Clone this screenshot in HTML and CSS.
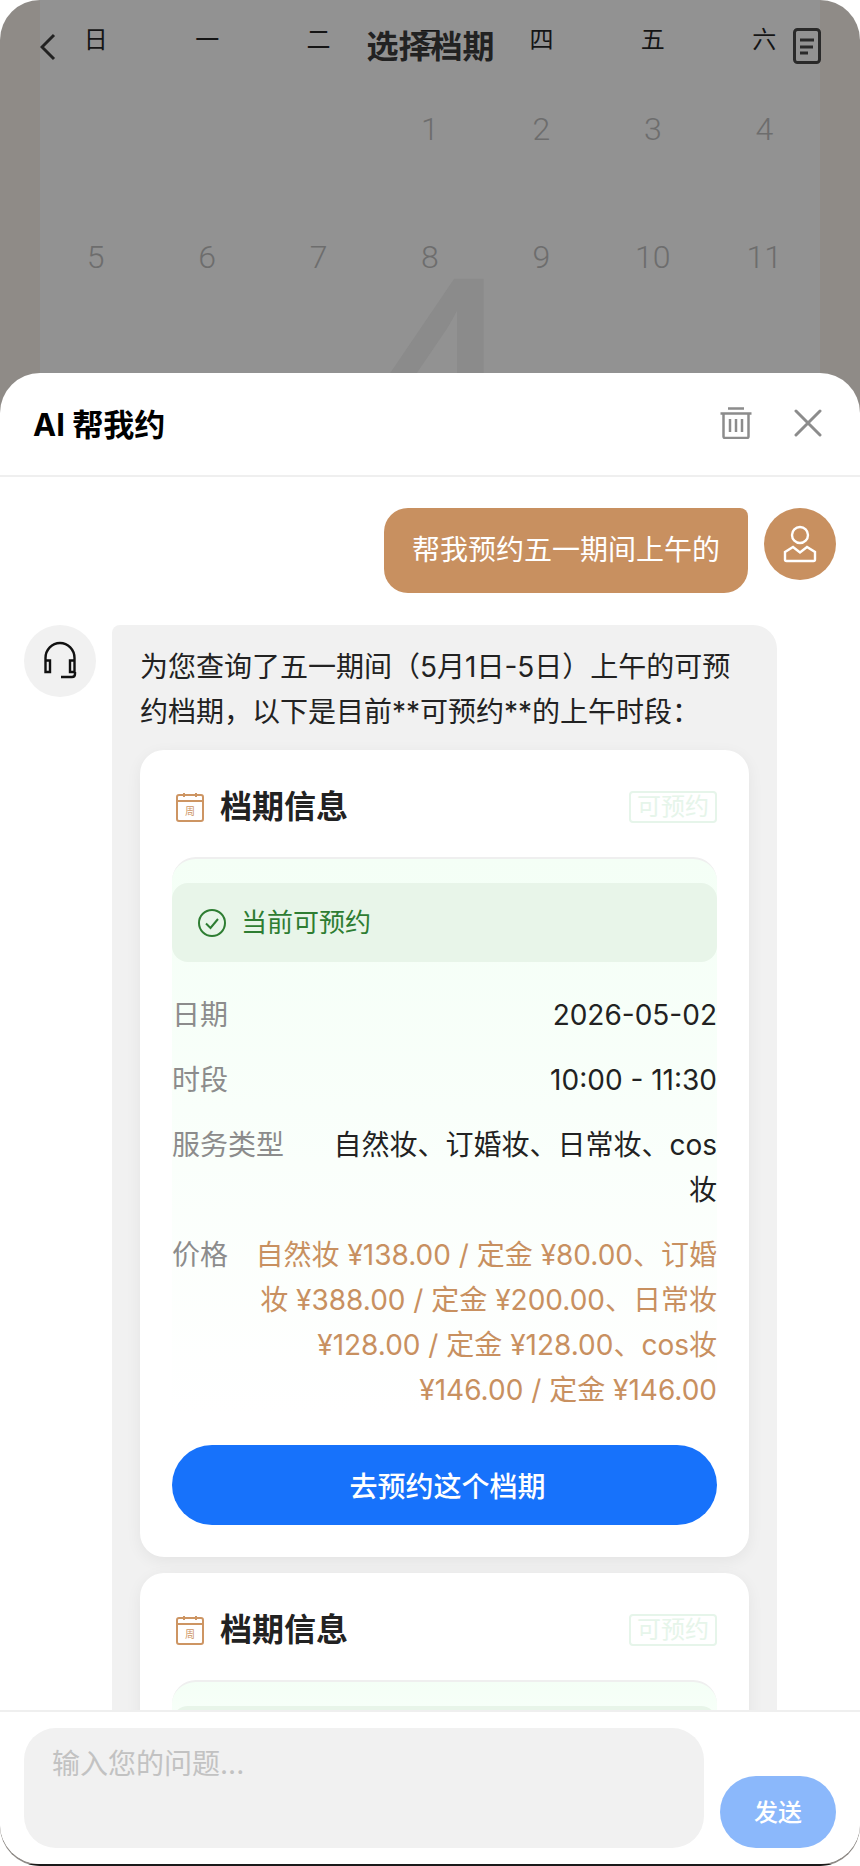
FILE: index.html
```html
<!doctype html>
<html lang="zh-CN">
    <head>
        <meta charset="utf-8">
        <meta name="viewport" content="width=device-width,user-scalable=no,initial-scale=1.0">
        <title>AI 帮我约</title>
        <link rel="stylesheet" href="styles.css">
    </head>
    <body>
        <div class="screen">

            <!-- 背景页:选择档期 -->
            <section class="calendar">
                <div class="watermark">4</div>
                <div class="cal-grid">
                    <span class="week">日</span><span class="week">一</span><span class="week">二</span><span class="week">三</span><span class="week">四</span><span class="week">五</span><span class="week">六</span>
                    <span></span><span></span><span></span><span class="day">1</span><span class="day">2</span><span class="day">3</span><span class="day">4</span>
                    <span class="day">5</span><span class="day">6</span><span class="day">7</span><span class="day">8</span><span class="day">9</span><span class="day">10</span><span class="day">11</span>
                </div>
            </section>
            <header class="page-head">
                <svg class="page-back" width="16" height="28" viewBox="0 0 16 28"><path d="M14 2 L2 14 L14 26"/></svg>
                <h1>选择档期</h1>
                <svg class="page-doc" width="28" height="36" viewBox="0 0 28 36"><rect x="1.5" y="1.5" width="25" height="33" rx="3"/><path d="M7 12 H21 M7 19 H20 M7 25 H15"/></svg>
            </header>

            <!-- 弹层 -->
            <section class="sheet">
                <div class="sheet-head">
                    <h2>AI 帮我约</h2>
                    <svg class="sheet-icon" width="32" height="32" viewBox="0 0 32 32"><path d="M8 1.5 H24 M0.5 6.5 H31.5 M3.5 6.5 V29.5 Q3.5 31 5 31 H27 Q28.5 31 28.5 29.5 V6.5 M10 12 V25 M16 12 V25 M22 12 V25"/></svg>
                    <svg class="sheet-icon close" width="28" height="28" viewBox="0 0 28 28"><path d="M2 2 L26 26 M26 2 L2 26"/></svg>
                </div>

                <div class="chat">
                    <div class="msg msg-user">
                        <div class="bubble bubble-user">帮我预约五一期间上午的</div>
                        <div class="avatar avatar-user">
                            <svg width="72" height="72" viewBox="0 0 72 72"><circle cx="36" cy="27" r="8"/><path d="M21 44 L29 39 L36 44.5 L43 39 L51 44 V51.5 Q51 53 49.5 53 H22.5 Q21 53 21 51.5 Z"/></svg>
                        </div>
                    </div>

                    <div class="msg">
                        <div class="avatar">
                            <svg width="72" height="72" viewBox="0 0 72 72"><path d="M21.5 36 V33 A14.5 15 0 0 1 50.5 33 V36 M21.5 35.5 H26 V47 H21.5 Z M46 35.5 H50.5 V47 H46 Z M51 47 V49 Q51 52 48 52 H37"/></svg>
                        </div>
                        <div class="bubble bubble-ai">
                            <p class="answer">为您查询了五一期间（5月1日-5日）上午的可预约档期，以下是目前**可预约**的上午时段：</p>

                            <div class="card">
                                <div class="card-head">
                                    <svg class="card-icon" width="28" height="30" viewBox="0 0 28 30"><rect x="1" y="3" width="26" height="26" rx="2"/><path d="M1 9 H27 M8 1 V5 M20 1 V5"/><text x="14" y="23" text-anchor="middle">周</text></svg>
                                    <h3>档期信息</h3>
                                    <span class="tag">可预约</span>
                                </div>
                                <div class="slot">
                                    <div class="slot-state">
                                        <svg width="28" height="28" viewBox="0 0 28 28"><circle cx="14" cy="14" r="13"/><path d="M8 14.5 L12.5 19 L20 10"/></svg>
                                        <span>当前可预约</span>
                                    </div>
                                    <dl class="slot-rows">
                                        <div class="row"><dt>日期</dt><dd>2026-05-02</dd></div>
                                        <div class="row"><dt>时段</dt><dd>10:00 - 11:30</dd></div>
                                        <div class="row"><dt>服务类型</dt><dd>自然妆、订婚妆、日常妆、cos妆</dd></div>
                                        <div class="row"><dt>价格</dt><dd class="price">自然妆 ¥138.00 / 定金 ¥80.00、订婚妆 ¥388.00 / 定金 ¥200.00、日常妆 ¥128.00 / 定金 ¥128.00、cos妆 ¥146.00 / 定金 ¥146.00</dd></div>
                                    </dl>
                                </div>
                                <button class="book-btn">去预约这个档期</button>
                            </div>

                            <div class="card">
                                <div class="card-head">
                                    <svg class="card-icon" width="28" height="30" viewBox="0 0 28 30"><rect x="1" y="3" width="26" height="26" rx="2"/><path d="M1 9 H27 M8 1 V5 M20 1 V5"/><text x="14" y="23" text-anchor="middle">周</text></svg>
                                    <h3>档期信息</h3>
                                    <span class="tag">可预约</span>
                                </div>
                                <div class="slot">
                                    <div class="slot-state">
                                        <svg width="28" height="28" viewBox="0 0 28 28"><circle cx="14" cy="14" r="13"/><path d="M8 14.5 L12.5 19 L20 10"/></svg>
                                        <span>当前可预约</span>
                                    </div>
                                </div>
                            </div>
                        </div>
                    </div>
                </div>

                <div class="sheet-foot">
                    <textarea class="ask" placeholder="输入您的问题..."></textarea>
                    <button class="send">发送</button>
                </div>
            </section>

            <div class="home-bar"></div>
        </div>
    </body>
</html>
```

FILE: styles.css
```css
*{
    margin: 0px;
    padding: 0px;
    box-sizing: border-box;
}
html,body{
    width: 860px;
    height: 1866px;
    overflow: hidden;
    background-color: #fff;
    font-family: Inter, "Noto Sans CJK SC", sans-serif;
}
.screen{
    position: relative;
    height: 1866px;
    border-radius: 40px;
    overflow: hidden;
    background-color: #8f8b87;
}

/* background page */
.calendar{
    position: relative;
    height: 400px;
    margin: 0 40px;
    background-color: #929292;
    overflow: hidden;
}
.cal-grid{
    position: relative;
    display: grid;
    grid-template-columns: repeat(7, 1fr);
    grid-template-rows: 65px 128px 128px;
    justify-items: center;
    align-items: center;
}
.week{
    align-self: start;
    height: 50px;
    margin-top: 15px;
    line-height: 50px;
    font-size: 24px;
    color: #151515;
}
.day{
    font-family: Roboto, sans-serif;
    font-size: 32px;
    font-weight: 300;
    color: #6d6d6d;
}
.watermark{
    position: absolute;
    top: 228px;
    left: 306px;
    font-size: 320px;
    line-height: 320px;
    font-family: "Liberation Sans", sans-serif;
    color: #8b8b8b;
}
.page-head{
    position: absolute;
    top: 18px;
    left: 40px;
    right: 39px;
    height: 56px;
    display: grid;
    grid-template-columns: 1fr auto 1fr;
    align-items: center;
}
.page-head h1{
    margin-bottom: 4px;
    font-size: 32px;
    font-weight: 700;
    color: #222;
}
.page-back{
    margin-top: 2px;
    fill: none;
    stroke: #222;
    stroke-width: 3;
}
.page-doc{
    justify-self: end;
    fill: none;
    stroke: #2a2a2a;
    stroke-width: 3;
}

/* sheet */
.sheet{
    position: absolute;
    top: 373px;
    left: 0;
    right: 0;
    bottom: 2px;
    display: flex;
    flex-direction: column;
    border-radius: 40px;
    background-color: #fff;
    overflow: hidden;
}
.sheet-head{
    flex: none;
    height: 104px;
    padding: 0 38px 3px 33px;
    display: flex;
    align-items: center;
    border-bottom: 2px solid #efefef;
}
.sheet-head h2{
    flex: 1;
    font-size: 31px;
    font-weight: 700;
    color: #000;
}
.sheet-icon{
    fill: none;
    stroke: #8c8c8c;
    stroke-width: 2.5;
}
.close{
    margin-left: 42px;
    stroke-width: 3;
    stroke-linecap: round;
}
.chat{
    flex: 1;
    min-height: 0;
    overflow: hidden;
    padding: 31px 24px 0;
}
.msg{
    display: flex;
    gap: 16px;
    align-items: flex-start;
}
.msg-user{
    justify-content: flex-end;
    margin-bottom: 32px;
}
.avatar{
    flex: none;
    width: 72px;
    height: 72px;
    border-radius: 50%;
    background-color: #f1f1f1;
}
.avatar svg{
    display: block;
    fill: none;
    stroke: #111;
    stroke-width: 2.4;
}
.avatar-user{
    background-color: #c89060;
}
.avatar-user svg{
    stroke: #fff;
}
.bubble{
    font-size: 28px;
    line-height: 45px;
}
.bubble-user{
    padding: 20px 28px;
    border-radius: 24px 8px 24px 24px;
    background-color: #c89060;
    color: #fff;
}
.bubble-ai{
    width: 665px;
    padding: 20px 28px;
    border-radius: 8px 24px 24px 24px;
    background-color: #f1f1f1;
    color: #222;
}
.answer{
    margin-bottom: -1px;
}

/* card */
.card{
    margin-top: 16px;
    padding: 32px;
    border-radius: 24px;
    background-color: #fff;
    box-shadow: 0 4px 16px rgba(0,0,0,.06);
}
.card-head{
    height: 49px;
    margin-bottom: 26px;
    display: flex;
    align-items: center;
}
.card-icon{
    margin: 0 16px 0 4px;
    fill: none;
    stroke: #cd9563;
    stroke-width: 2;
}
.card-icon text{
    font-size: 10px;
    fill: #cd9563;
    stroke: none;
}
.card-head h3{
    flex: 1;
    font-size: 32px;
    font-weight: 700;
    color: #222;
}
.tag{
    height: 32px;
    width: 88px;
    line-height: 28px;
    text-align: center;
    font-size: 24px;
    color: #e6f5ea;
    border: 2px solid #e6f5ea;
    border-radius: 4px;
}
.slot{
    padding-top: 24px;
    border-top: 2px solid #efefef;
    border-radius: 24px 24px 0 0;
    background: linear-gradient(#f4fff6, #fff);
}
.slot-state{
    height: 79px;
    padding: 0 26px;
    display: flex;
    align-items: center;
    gap: 15px;
    border-radius: 16px;
    background-color: #e8f5e9;
    font-size: 26px;
    color: #2e7d32;
}
.slot-state svg{
    flex: none;
    fill: none;
    stroke: #2e7d32;
    stroke-width: 2;
}
.slot-rows{
    margin-top: 31px;
    display: flex;
    flex-direction: column;
    gap: 20px;
}
.row{
    display: flex;
    gap: 26px;
}
.row dt{
    flex: none;
    color: #8c8c8c;
}
.row dd{
    flex: 1;
    text-align: right;
    color: #222;
}
.row .price{
    color: #c89060;
}
.book-btn{
    display: block;
    width: 100%;
    height: 80px;
    margin-top: 32px;
    padding-left: 6px;
    border: 0;
    border-radius: 40px;
    background-color: #1772fb;
    font-family: inherit;
    font-size: 28px;
    font-weight: 500;
    color: #fff;
}

/* footer */
.sheet-foot{
    flex: none;
    padding: 16px 24px;
    display: flex;
    align-items: flex-end;
    gap: 16px;
    border-top: 2px solid #efefef;
    background-color: #fff;
}
.ask{
    display: block;
    width: 680px;
    height: 120px;
    padding: 15px 28px;
    border: 0;
    outline: 0;
    resize: none;
    border-radius: 32px;
    background-color: #f1f1f1;
    font-family: inherit;
    font-size: 28px;
    line-height: 42px;
}
.ask::placeholder{
    color: #c2c2c2;
}
.send{
    width: 116px;
    height: 72px;
    padding-bottom: 3px;
    border: 0;
    border-radius: 36px;
    background-color: #8bb8fb;
    font-family: inherit;
    font-size: 24px;
    font-weight: 500;
    color: #fff;
}
.home-bar{
    position: absolute;
    left: 20px;
    right: 20px;
    bottom: 0;
    height: 2px;
    background-color: #1a1a1a;
}
```
